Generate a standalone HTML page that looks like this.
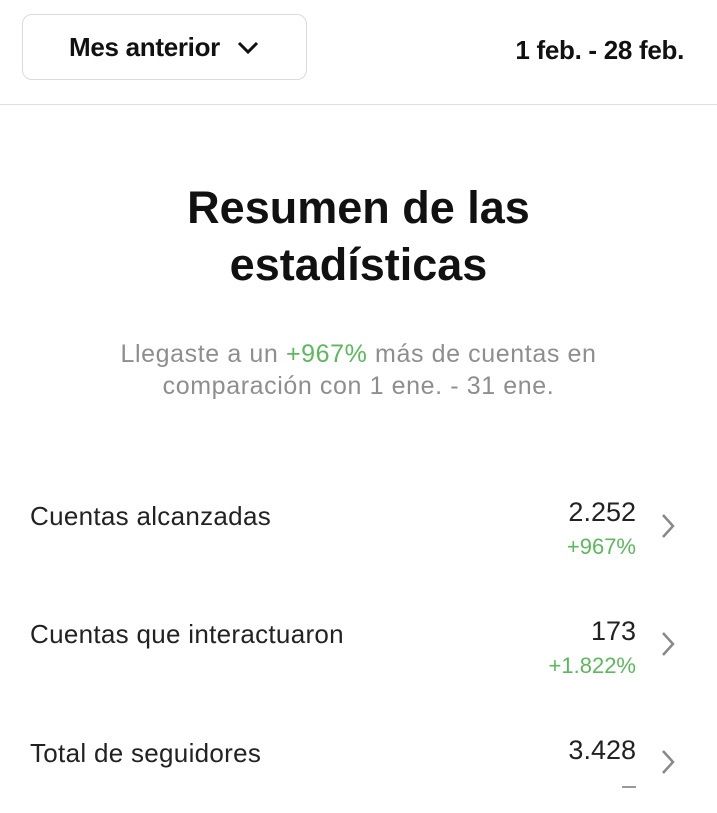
<!DOCTYPE html>
<html><head><meta charset="utf-8"><style>
body{margin:0;width:717px;height:813px;background:#fff;font-family:"Liberation Sans",sans-serif;color:#111;position:relative;overflow:hidden}
.a{position:absolute;white-space:nowrap}
.btn{position:absolute;left:22px;top:14px;width:283px;height:64px;border:1.5px solid #dbdbdb;border-radius:10px}
.lbl{font-size:26px;color:#222;left:30px;letter-spacing:0.3px}
.val{font-size:27px;color:#222;right:81px;text-align:right}
.grn{font-size:22px;color:#5cb85c;right:81px;text-align:right}
.chev{position:absolute;left:660px}
</style></head><body>
<div class="btn"></div>
<div class="a" style="left:69px;top:32px;font-size:26px;font-weight:bold;letter-spacing:-0.3px">Mes anterior</div>
<svg class="a" style="left:236px;top:41px" width="24" height="14" viewBox="0 0 24 14"><path d="M3 2 L12 11 L21 2" fill="none" stroke="#111" stroke-width="3"/></svg>
<div class="a" style="right:33px;top:35px;font-size:26px;font-weight:bold;letter-spacing:-0.3px">1 feb. - 28 feb.</div>
<div class="a" style="left:0;top:104px;width:717px;height:1px;background:#e0e0e0"></div>
<div class="a" style="left:0;width:717px;text-align:center;top:179px;font-size:45px;font-weight:bold;line-height:57px">Resumen de las<br>estadísticas</div>
<div class="a" style="left:0;width:717px;text-align:center;top:338px;font-size:25px;letter-spacing:0.6px;color:#8e8e8e;line-height:32px">Llegaste a un <span style="color:#5cb85c">+967%</span> más de cuentas en<br>comparación con 1 ene. - 31 ene.</div>
<div class="a lbl" style="top:501px">Cuentas alcanzadas</div>
<div class="a val" style="top:497px">2.252</div>
<div class="a grn" style="top:534px">+967%</div>
<svg class="chev" style="top:512px" width="16" height="28" viewBox="0 0 16 28"><path d="M3 3 L13 14 L3 25" fill="none" stroke="#888" stroke-width="2.5"/></svg>
<div class="a lbl" style="top:619px">Cuentas que interactuaron</div>
<div class="a val" style="top:616px">173</div>
<div class="a grn" style="top:653px">+1.822%</div>
<svg class="chev" style="top:630px" width="16" height="28" viewBox="0 0 16 28"><path d="M3 3 L13 14 L3 25" fill="none" stroke="#888" stroke-width="2.5"/></svg>
<div class="a lbl" style="top:738px">Total de seguidores</div>
<div class="a val" style="top:735px">3.428</div>
<div class="a" style="left:622px;top:786px;width:14px;height:2px;background:#999"></div>
<svg class="chev" style="top:748px" width="16" height="28" viewBox="0 0 16 28"><path d="M3 3 L13 14 L3 25" fill="none" stroke="#888" stroke-width="2.5"/></svg>
</body></html>
